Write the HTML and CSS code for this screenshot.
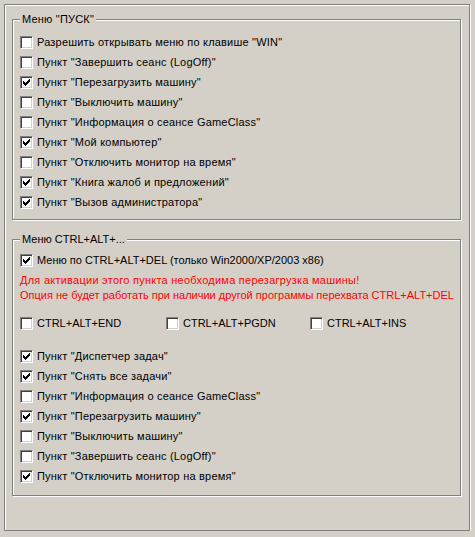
FILE: index.html
```html
<!DOCTYPE html>
<html lang="ru">
<head>
<meta charset="utf-8">
<title>Меню</title>
<link rel="stylesheet" href="styles.css">
</head>
<body>
<div class="frame">
  <div class="group group-start">
    <div class="legend">Меню "ПУСК"</div>
    <div class="rows rows-start">
      <label class="row"><span class="cb"></span>Разрешить открывать меню по клавише "WIN"</label>
      <label class="row"><span class="cb"></span>Пункт "Завершить сеанс (LogOff)"</label>
      <label class="row"><span class="cb on"></span>Пункт "Перезагрузить машину"</label>
      <label class="row"><span class="cb"></span>Пункт "Выключить машину"</label>
      <label class="row"><span class="cb"></span>Пункт "Информация о сеансе GameClass"</label>
      <label class="row"><span class="cb on"></span>Пункт "Мой компьютер"</label>
      <label class="row"><span class="cb"></span>Пункт "Отключить монитор на время"</label>
      <label class="row"><span class="cb on"></span>Пункт "Книга жалоб и предложений"</label>
      <label class="row"><span class="cb on"></span>Пункт "Вызов администратора"</label>
    </div>
  </div>
  <div class="group group-cad">
    <div class="legend tight">Меню CTRL+ALT+...</div>
    <div class="rows rows-cad">
      <label class="row tight"><span class="cb on"></span>Меню по CTRL+ALT+DEL (только Win2000/XP/2003 x86)</label>
    </div>
    <div class="warn">
      <div class="warn-wide">Для активации этого пункта необходима перезагрузка машины!</div>
      <div>Опция не будет работать при наличии другой программы перехвата CTRL+ALT+DEL</div>
    </div>
    <div class="keys">
      <label class="row tight"><span class="cb"></span>CTRL+ALT+END</label>
      <label class="row tight"><span class="cb"></span>CTRL+ALT+PGDN</label>
      <label class="row tight"><span class="cb"></span>CTRL+ALT+INS</label>
    </div>
    <div class="rows rows-items">
      <label class="row"><span class="cb on"></span>Пункт "Диспетчер задач"</label>
      <label class="row"><span class="cb on"></span>Пункт "Снять все задачи"</label>
      <label class="row"><span class="cb"></span>Пункт "Информация о сеансе GameClass"</label>
      <label class="row"><span class="cb on"></span>Пункт "Перезагрузить машину"</label>
      <label class="row"><span class="cb"></span>Пункт "Выключить машину"</label>
      <label class="row"><span class="cb"></span>Пункт "Завершить сеанс (LogOff)"</label>
      <label class="row"><span class="cb on"></span>Пункт "Отключить монитор на время"</label>
    </div>
  </div>
</div>
</body>
</html>
```
FILE: styles.css
```css
html, body {
  margin: 0;
  padding: 0;
  background: #d4d0c8;
}
body {
  font-family: "Liberation Sans", Arial, sans-serif;
  font-size: 11px;
  color: #000;
}
.frame {
  box-sizing: border-box;
  margin: 4px 0 0 4px;
  width: 466px;
  height: 527px;
  padding: 14px 0 0 7px;
  border: 1px solid #808080;
  box-shadow: inset 1px 1px 0 #fff, 1px 1px 0 #fff;
}
.group {
  box-sizing: border-box;
  width: 449px;
  padding: 0 0 0 7px;
  border: 1px solid #808080;
  box-shadow: inset 1px 1px 0 #fff, 1px 1px 0 #fff;
}
.group-start {
  height: 201px;
}
.group-cad {
  height: 257px;
  margin-top: 19px;
}
.legend {
  width: fit-content;
  height: 13px;
  line-height: 13px;
  margin-top: -7px;
  padding: 0 2px;
  background: #d4d0c8;
  white-space: nowrap;
  letter-spacing: 0.2px;
}
.rows {
  display: flex;
  flex-direction: column;
  gap: 7px;
}
.rows-start { margin-top: 10px; }
.rows-cad { margin-top: 8px; }
.rows-items { margin-top: 20px; }
.row {
  display: flex;
  align-items: center;
  gap: 4px;
  height: 13px;
  line-height: 13px;
  white-space: nowrap;
  letter-spacing: 0.2px;
}
.legend.tight,
.row.tight {
  letter-spacing: 0;
}
.cb {
  position: relative;
  flex: none;
  box-sizing: border-box;
  width: 13px;
  height: 13px;
  background: #fff;
  border: 1px solid;
  border-color: #808080 #fff #fff #808080;
  box-shadow: inset 1px 1px 0 #404040, inset -1px -1px 0 #d4d0c8;
}
.cb.on::after {
  content: "";
  position: absolute;
  left: 2px;
  top: 2px;
  width: 7px;
  height: 7px;
  background:
    linear-gradient(#000, #000) 0 2px / 1px 3px no-repeat,
    linear-gradient(#000, #000) 1px 3px / 1px 3px no-repeat,
    linear-gradient(#000, #000) 2px 4px / 1px 3px no-repeat,
    linear-gradient(#000, #000) 3px 3px / 1px 3px no-repeat,
    linear-gradient(#000, #000) 4px 2px / 1px 3px no-repeat,
    linear-gradient(#000, #000) 5px 1px / 1px 3px no-repeat,
    linear-gradient(#000, #000) 6px 0 / 1px 3px no-repeat;
}
.warn {
  margin-top: 6px;
  color: #ff0000;
  line-height: 15px;
  white-space: nowrap;
}
.warn-wide {
  letter-spacing: 0.25px;
}
.keys {
  display: grid;
  grid-template-columns: 146px 144px auto;
  margin-top: 14px;
}
```
